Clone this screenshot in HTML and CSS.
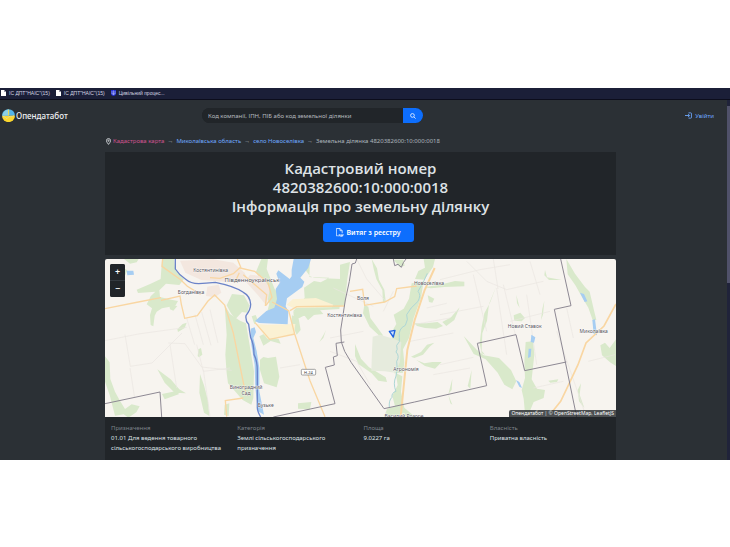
FILE: index.html
```html
<!DOCTYPE html>
<html lang="uk">
<head>
<meta charset="utf-8">
<title>Кадастровий номер 4820382600:10:000:0018</title>
<link rel="stylesheet" href="styles.css">
</head>

<body>
<div class="screen">

<nav class="bookmarks">
  <a href="#"><svg class="doc-icon" viewBox="0 0 10 12"><path d="M0 0h6l4 4v8H0z" fill="#fff"/><path d="M6 0v4h4" fill="#99a"/></svg>ІС ДПТ"НАІС"(15)</a>
  <a href="#"><svg class="doc-icon" viewBox="0 0 10 12"><path d="M0 0h6l4 4v8H0z" fill="#fff"/><path d="M6 0v4h4" fill="#99a"/></svg>ІС ДПТ"НАІС"(15)</a>
  <a href="#"><svg class="doc-icon" viewBox="0 0 10 12"><path d="M0 0h10v8q0 3-5 4q-5-1-5-4z" fill="#2632d8"/><path d="M2 2v6h6V2M5 1v9" fill="none" stroke="#dde4ff"/></svg>Цивільний процес...</a>
</nav>

<div class="viewport">
<div class="page">

<header class="topbar">
  <a class="brand" href="#">
    <svg class="logo" viewBox="0 0 39 39">
      <path d="M0 20a19.500 19.500 0 0 1 39 0z" fill="#52b5ea"/>
      <path d="M0 20a19.500 19.500 0 0 0 39 0z" fill="#fbd62e"/>
      <path d="M20 1v19H1Q4 4 20 1z" fill="#8ccfe6"/>
      <path d="M3 22q8 2 12 7 5-8 10-7 6 1 11-2" fill="none" stroke="#e5dc8a" stroke-width="3"/>
      <path d="M20 2v17" stroke="#f8db4c" stroke-width="3"/>
    </svg>
    Опендатабот
  </a>
  <form class="search">
    <input type="text" aria-label="Пошук" placeholder="Код компанії, ІПН, ПІБ або код земельної ділянки">
    <button type="button" aria-label="Знайти">
      <svg viewBox="0 0 16 16"><circle cx="6.500" cy="6.500" r="5" /><path d="M10.500 10.500L15 15"/></svg>
    </button>
  </form>
  <a class="login" href="#">
    <svg viewBox="0 0 16 16"><path d="M8 2h5q2 0 2 2v8q0 2-2 2H8M0 8h10M7 4.500L10.500 8L7 11.500"/></svg>
    Увійти
  </a>
</header>

<main class="content">
  <nav class="crumbs">
    <svg viewBox="0 0 12 16"><path d="M6 15Q1 9 1 6a5 5 0 0 1 10 0Q11 9 6 15z"/><circle cx="6" cy="6" r="1.500"/></svg>
    <a class="root" href="#">Кадастрова карта</a>
    <span class="arrow">→</span>
    <a href="#">Миколаївська область</a>
    <span class="arrow">→</span>
    <a href="#">село Новоселівка</a>
    <span class="arrow">→</span>
    <span>Земельна ділянка 4820382600:10:000:0018</span>
  </nav>

  <section class="title">
    <h1>Кадастровий номер<br>4820382600:10:000:0018<br>Інформація про земельну ділянку</h1>
    <button type="button" class="extract">
      <svg viewBox="0 0 22 24"><path d="M5 21H1V1h10l6 6v7M11 1v6h6"/><path d="M8 23v-5h2v2H8M13 18v5h2v-5zM18 23v-5h3M18 20h2"/></svg>
      Витяг з реєстру
    </button>
  </section>

  <section class="map">
    <svg class="tiles" viewBox="15 13 1533 474">
      <rect x="15" y="13" width="1533" height="474" fill="#f7f4ef"/>

      <!-- woods and fields, west half -->
      <g fill="#d9e9cb">
        <path d="M186 13h36l4 34 26 26-14 18-40-4-20 20 2 20 34 8 20 4-8 14-40 8-16 10-6 12-4 32-8-4-2-30 6-20-16-12 12-24 14-14-52 4-4-10 42-18 30-14z"/>
        <path d="M72 13h44l-6 10-20 4zM40 47l30-8 12 8-6 14-26 4zM208 152l24 2-12 14-10-4z"/>
        <path d="M396 118l36 4 16 30-6 22-16-2-20 22-14-20-12-22z"/>
        <path d="M374 152l16 26 30 20 18 8 4 24 10 60 10 60-2 80-6 20-26-14-44-50-4-30-4-56 4-60z"/>
        <path d="M484 13h20l-4 30 24 60 26 36-20 22-10 24-20-8 8-30-22-60-18-36zM455 185l12-4 6 14-10 14z"/>
        <path d="M478 245l24-12 6 14 28 6 6 14-30-8-22 14zM480 315l10-8 14 3 24-4 10 60-8 32-38-12-12-40z"/>
        <path d="M295 284l8-4 4 20-10 8-4-4zM15 305l14 18 2 50 14 38 14 26 16 26 20-14 24 6-10 18-24 16-14-10-26 4-16-62-14-40z"/>
        <path d="M172 344l40 30 26 30 20 12-34-2-30-30zM300 358l12 34 12 46 4 46-16-10-14-60zM186 418l40-8 12 8-44 16zM374 450l14-4-2 38-14-4zM248 208l12-4-6 16-20 12-2-8z"/>
        <path d="M630 13h-14l-8 22 22 30 12 4 80 4 8-20-6 70-6 40-60 4-34 30-10-14-34-14 34-40-2-30 30-20 20 4 26-14-60-2z"/>
        <path d="M720 30l30-8-8 50-8 80-24 6-34-4-26-30 50-20 20-20z"/>
        <path d="M580 170l80-4 10 12-60 6-28 14zM576 182l20 10 6 34-12 14-16-36zM678 226l-8 24-12 12 14-24zM594 446l40-4-4 22-36-2z"/>
      </g>

      <!-- woods and fields, east half -->
      <g fill="#d9e9cb" transform="translate(765 0)">
        <path d="M50 13l16 28 6 34 16 30 4 34-8 6-2-38-18-34-8-30zM28 150l12 6 6 34 18 24 20 28-6 6-34-32-20-40zM0 268l18 44 24 26 50 30 4 14-26-4-20-22-40-28-10-24z"/>
        <path d="M206 13h34l-6 24-26 38-28-2 10-24 20-10z"/>
        <path d="M170 86l36-6-8 50-22 60-14 60-18 34 4 40-4 30-26 2 4-40-10-30-2-54 14-24-8-28 30-18 16-30z"/>
        <path d="M122 355l20 10-4 46 10 48 30 26H88l8-22 24-8-8-32 16-32zM115 15h30l4 18-14 4zM208 98l56-10 36-9 28 2v14l-60 2-40 4zM218 122l20 10-6 12-10-2z"/>
        <path d="M178 206l36 0 34-4 16 12-20 8-34-2-24-6zM262 202l26-14 26-30-16 38-24 18zM168 306l30-14 18-22 22-6-14 12-20 24-26 10zM184 316l24 10 24-4 28 0-20 20-30-8z"/>
        <path d="M424 94l-22 54-6 50-14 38-2 52 10 12-10-4-6-30 6-50 8-40 18-34z"/>
        <path d="M326 244l40 42 20 16 46 8 36 36 16 34-12 24-24-14-20-36-36-40-36-16zM350 346l-4 56-8-8zM292 372l-2 34-10 12zM280 420l12 30-6-4z"/>
        <path d="M476 182l20-8 14 16-10 10-22-2zM512 262l22-2 4 40-8 74 16 28 24 4-4 24-30 12-14 34-12 0-4-44-6-26 10-36-2-50zM484 120l10 40-8-14zM568 138l-4 42-6 16 4-34z"/>
        <path d="M634 13l26 44 30 40 14 14 14 60 6 24-10 4-14-40-18-30-20-36-24-34zM570 46l6 22 44 8-38 0-14-14zM736 272l14-8 14 16 19-26v80l-16-10-26-22zM580 378l30-4-4 8-20 2zM678 386l-4 34 14 40-16-20-4-34z"/>
      </g>
      <path d="M818 246l22-6 40 12 24 10-4 60-14 32-32-4-40-2 2-60z" fill="#e6ebdd"/>

      <!-- built-up areas -->
      <g fill="#f3e7df">
        <path d="M240 18l100-4 60 10 34 30 10 26-60 2-80-6-48-22zM450 60l34 4 26 36-10 54-24-30-40-44zM322 96l34-6 8 24-20 14-26-4z"/>
      </g>
      <g fill="#fbf1d3">
        <path d="M578 134l70-4 52 20-4 8-116 2-20-10zM468 208l34 2 84-2-4 30-78 16-14-16z"/>
      </g>

      <!-- field tracks -->
      <g fill="none" stroke="#eae6e1" stroke-width="2">
        <path d="M15 258l100-20 145-20M75 240l16 95 65-10 90-90M260 190l24 80M285 180l25 90M305 172l28 100M330 165l24 100M205 265l50 2 50 70 90 10M210 270l20 130M290 270l20 80 80-10M90 340l14 90M310 345l20 140"/>
        <path d="M540 340l60-10M690 290l80 30 40 70M770 13l30 60 60 70M690 250l100-20M700 100l120 55M940 210l110-20M930 260l130-25M980 160l60-14M1000 360l110-20M880 110l-30 60"/>
        <path d="M1020 75l120-30 90-15M1100 20l60 60 60 25 110-25M1120 60l40 170M1190 100l30 200M1210 90l36 150M1020 180l130-25M1020 330l100-22M1230 200l120-30M1280 120l30 210M1400 160l20 90M1370 230l90 260M1465 320l80-20M1300 400l90-20M1180 13l14 90M1290 20l30 100"/>
      </g>

      <!-- water -->
      <g fill="#a6cdf2">
        <path d="M581 13h52l-8 26-24 30 12 12-6 16-46 34-4 24 8 14-2 40-86-4-12-6 34-30 24-10 8-26-4-30 12-18-10-28 6-10 34 26 6-8 0-20z"/>
        <path d="M80 48l20 0 2 12-20 2zM452 222l12-4 4 14-8 18 10 40 8 50 0 70 14 70-18-10-8-70-2-70-10-60z"/>
        <path d="M1440 114l12 4 10 22-8 2zM1477 196l8-2 6 48-10-4zM1294 240l12 8-4 16-10-2zM1286 282h8l-2 24-8 4zM1248 376l10 6 8 18-8-4z"/>
      </g>
      <path d="M982 56q-12 30-28 54 10 10 0 30-24 20-34 40 6 14-4 32-22 10-18 36 4 14-8 24 4 14-2 20 12 12 2 28 4 20-2 44-10 24 0 46-14 4-12 18-10 8-8 30" fill="none" stroke="#aed7d6" stroke-width="3"/>

      <!-- roads -->
      <g fill="none" stroke="#f9d6a2" stroke-width="4">
        <path d="M15 162l100-20 68-13M183 137l57-13 4 25 10 42 38-8 32-44 20-18 30 30 26 84 38 188M430 430l-54 8 4 48M188 13l-2 22 56 40 20 20 40 24M412 13l10 24-22 20-40 14-30-2M420 40l44 10 40 34 12 44-18 24"/>
        <path d="M465 204l44 50 76-16M516 142l50 26 18 70 46 140 45 108M570 168l20-12 145-2M750 110l38-6 6 48 60-10 30-16 6-24 60-8M430 60l70 60-4 34M404 84l14-30"/>
        <path d="M1004 40l-30 66-30 90-22 90-8 80-12 121" stroke-width="6"/>
        <path d="M1548 148l-36 66-54 51-24 65-28 60-24 50-24 30" stroke-width="5"/>
      </g>
      <path d="M226 13v30q10 16 30 30 16 14 40 14 20-2 50-4 60 12 84 30 20 10 22 36 0 16-14 34-2 16 8 26 2 16 6 40 10 20 10 50 10 20 10 50v110q0 10 10 28" fill="none" stroke="#6b83c8" stroke-width="4"/>

      <!-- district borders -->
      <g fill="none" stroke="#8d8893" stroke-width="3">
        <path d="M15 447l165-35 5 75M520 487l185-40-29-109 27-7-3-24 12-4-4-37 25-4M770 13l-4 12-10 3-8 52-12 56-14 90 2 36 10 28 20 34 98 138 92-20 216-49-28-127 116-26 26 108 125-26M1382 13l31 140-50 11 33 158 34 165"/>
        <path d="M880 13l4 20 10-4 10 9 6-14 8-11"/>
      </g>

      <g class="badge">
        <rect x="604" y="344" width="43" height="17" rx="3"/>
        <text x="625" y="357">Н-24</text>
      </g>
      <g class="places">
        <text x="332" y="51">Костянтинівка</text>
        <text class="town" x="456" y="83">Південноукраїнськ</text>
        <text x="273" y="118">Богданівка</text>
        <text x="438" y="402">Виноградний</text>
        <text x="438" y="421">Сад</text>
        <text x="497" y="456">Бузьке</text>
        <text x="789" y="135">Воля</text>
        <text x="734" y="186">Костянтинівка</text>
        <text x="987" y="92">Новоселівка</text>
        <text x="918" y="350">Агрономія</text>
        <text x="912" y="489">Василий Розоре</text>
        <text x="1274" y="221">Новий Ставок</text>
        <text x="1481" y="235">Миколаївка</text>
      </g>
      <path d="M868 230l17-3-5 20z" fill="#cfe2fd" stroke="#1f63e0" stroke-width="4" stroke-linejoin="round"/>
    </svg>
    <div class="zoom">
      <button type="button" aria-label="Наблизити">+</button>
      <button type="button" aria-label="Віддалити">−</button>
    </div>
    <div class="credits"><a href="#">Опендатабот</a> | © <a href="#">OpenStreetMap</a>, <a href="#">LeafletJS</a></div>
  </section>

  <dl class="facts">
    <div><dt>Призначення</dt><dd>01.01 Для ведення товарного сільськогосподарського виробництва</dd></div>
    <div><dt>Категорія</dt><dd>Землі сільськогосподарського призначення</dd></div>
    <div><dt>Площа</dt><dd>9.0227 га</dd></div>
    <div><dt>Власність</dt><dd>Приватна власність</dd></div>
  </dl>
</main>

</div>
<div class="scrollbar"><div class="thumb"></div></div>
</div>

</div>
</body>
</html>
```

FILE: styles.css
```css
body {
  margin: 0;
  padding: 88px 0;
  background: #fff;
  font-family: "Noto Sans", "Open Sans", sans-serif;
  font-size: 6px;
  line-height: 10px;
  color: #dee2e6;
}
a {
  color: #6ea8fe;
  text-decoration: none;
}
button, input {
  font: inherit;
  border: 0;
  margin: 0;
  padding: 0;
}
.screen {
  background: #2b3035;
}
.bookmarks {
  display: flex;
  gap: 6px;
  padding: 0 1px 1px;
  background: #1b1f38;
  border-bottom: 1px solid #0c0d1c;
  font-family: "Liberation Sans Narrow", "Liberation Sans", sans-serif;
  font-size: 5px;
}
.bookmarks a {
  display: flex;
  align-items: center;
  gap: 3px;
  color: #d5d6e2;
}
.doc-icon {
  width: 5px;
  height: 6px;
}
.viewport {
  display: flex;
}
.page {
  flex: 1;
}
.scrollbar {
  width: 3px;
  background: #20233a;
  padding-top: 6px;
}
.thumb {
  height: 50%;
  background: #50516a;
}

.topbar {
  display: grid;
  grid-template-columns: 200fr 221fr 291fr;
  align-items: center;
  padding: 8px 13px 7px 2px;
}
.brand {
  display: flex;
  align-items: center;
  gap: 1px;
  color: #f0f2f4;
  font-size: 8px;
  font-weight: 500;
}
.logo {
  width: 13px;
  height: 13px;
}
.search {
  display: flex;
  height: 15px;
  border-radius: 8px;
  overflow: hidden;
  background: #212529;
}
.search input {
  flex: 1;
  min-width: 0;
  padding-left: 6px;
  background: #212529;
  color: #dee2e6;
}
.search input::placeholder {
  color: #b5babf;
  opacity: 1;
}
.search button {
  display: flex;
  align-items: center;
  justify-content: center;
  width: 20px;
  background: #0d6efd;
}
.search svg {
  width: 6px;
  height: 6px;
  fill: none;
  stroke: #fff;
  stroke-width: 2;
}
.login {
  display: flex;
  align-items: center;
  justify-content: flex-end;
  gap: 3px;
}
.login svg {
  width: 7px;
  height: 7px;
  fill: none;
  stroke: #6ea8fe;
  stroke-width: 2;
}

.content {
  width: 70%;
  min-width: 511px;
  margin: 0 auto;
  padding-right: 6px;
}
.crumbs {
  display: flex;
  align-items: center;
  gap: 2px;
  padding: 6px 1px;
  color: #adb5bd;
}
.crumbs .arrow {
  padding: 0 1px;
}
.crumbs svg {
  width: 5px;
  height: 7px;
  fill: none;
  stroke: #dee2e6;
  stroke-width: 2;
}
.crumbs .root {
  color: #d0538f;
}
.title {
  padding: 7px 8px 13px;
  margin-bottom: 4px;
  background: #212529;
  text-align: center;
}
h1 {
  margin: 0 0 7px;
  font-family: "Open Sans", "Noto Sans", sans-serif;
  font-size: 15px;
  font-weight: 600;
  line-height: 19px;
}
.extract {
  display: inline-flex;
  align-items: center;
  gap: 2px;
  height: 19px;
  margin-left: 16px;
  padding: 0 13px;
  border-radius: 3px;
  background: #0d6efd;
  color: #fff;
  font-size: 7px;
  font-weight: 600;
}
.extract svg {
  width: 8px;
  height: 9px;
  fill: none;
  stroke: #fff;
  stroke-width: 2;
}

.map {
  position: relative;
  overflow: hidden;
  border-radius: 2px 2px 0 0;
}
.tiles {
  display: block;
  width: 100%;
}
.places text {
  font-size: 15px;
  fill: #55535a;
  stroke: #fff;
  stroke-width: 2px;
  paint-order: stroke;
  text-anchor: middle;
}
.places .town {
  font-size: 18px;
}
.badge rect {
  fill: #fff;
  stroke: #777;
  stroke-width: 2px;
}
.badge text {
  font-size: 12px;
  fill: #333;
  text-anchor: middle;
}
.zoom {
  position: absolute;
  top: 5px;
  left: 5px;
  display: flex;
  flex-direction: column;
  border-radius: 2px;
  overflow: hidden;
  background: #343a40;
  gap: 1px;
}
.zoom button {
  width: 15px;
  height: 16px;
  background: #212529;
  color: #fff;
  font-size: 9px;
  font-weight: 600;
}
.credits {
  position: absolute;
  right: 0;
  bottom: 0;
  padding: 0 2px;
  border-radius: 2px 0 0 0;
  background: rgba(33, 37, 41, 0.8);
  font-size: 5px;
  line-height: 7px;
}
.credits a {
  color: #fff;
}

.facts {
  display: grid;
  grid-template-columns: repeat(4, 1fr);
  margin: 0;
  padding: 6px 0 7px 6px;
  background: #212529;
}
.facts dt {
  color: #7d8389;
}
.facts dd {
  margin: 0;
}
```
